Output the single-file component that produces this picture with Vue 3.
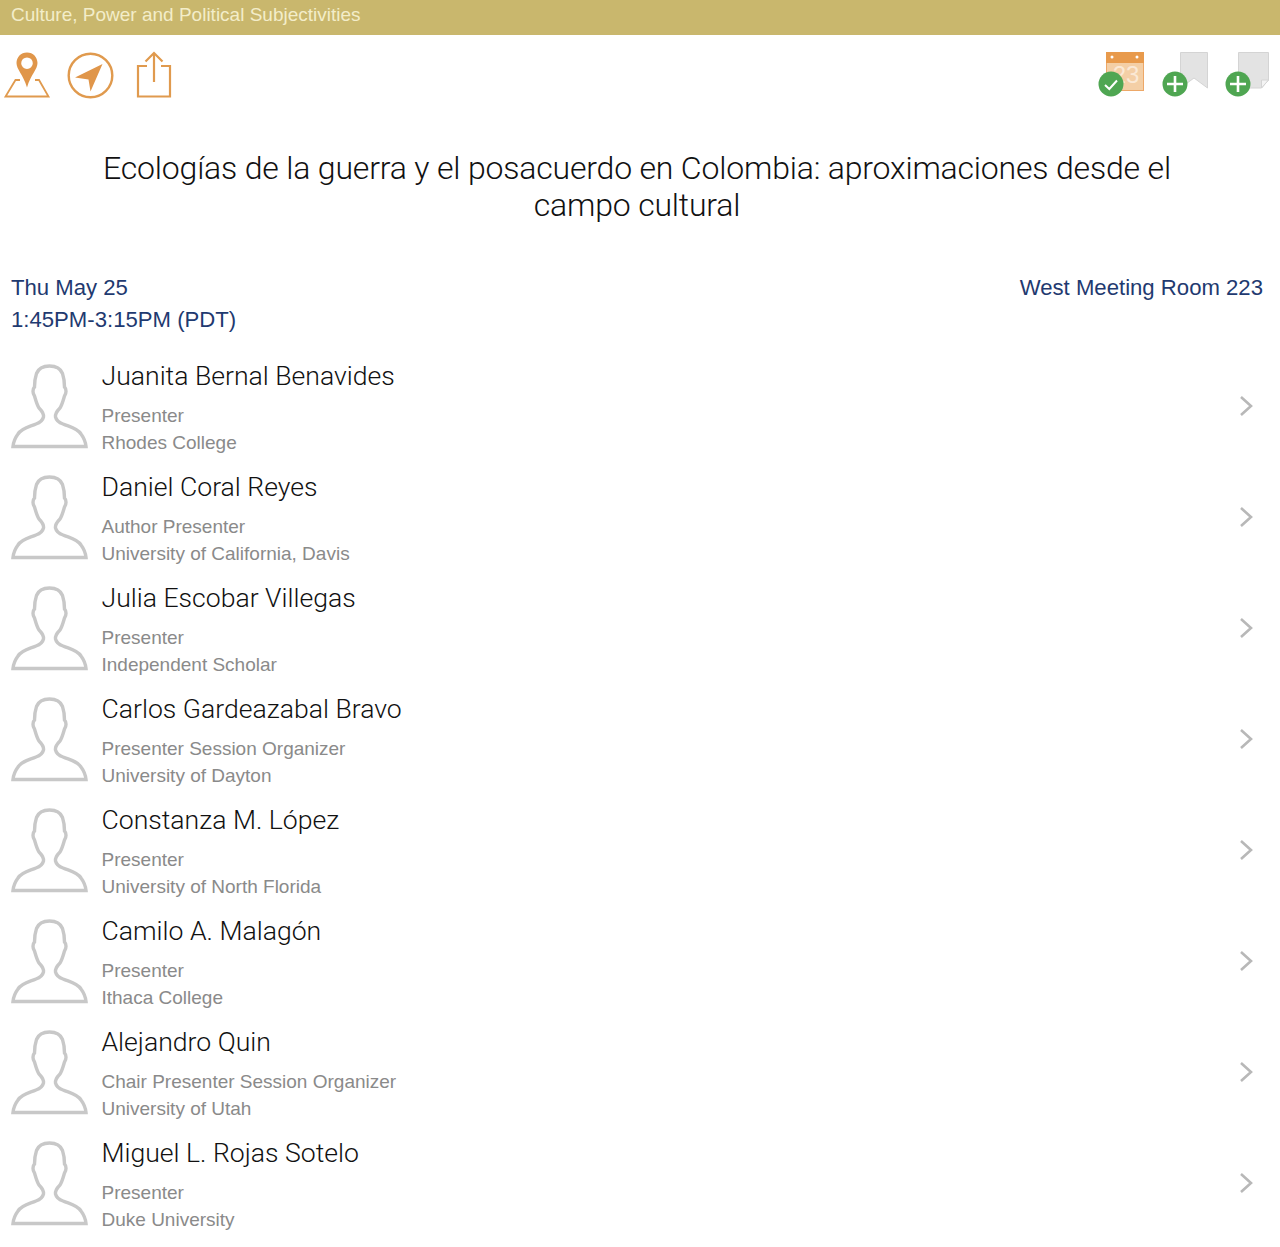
<script setup>
const people = [
  { name: 'Juanita Bernal Benavides', role: 'Presenter', org: 'Rhodes College' },
  { name: 'Daniel Coral Reyes', role: 'Author Presenter', org: 'University of California, Davis' },
  { name: 'Julia Escobar Villegas', role: 'Presenter', org: 'Independent Scholar' },
  { name: 'Carlos Gardeazabal Bravo', role: 'Presenter Session Organizer', org: 'University of Dayton' },
  { name: 'Constanza M. López', role: 'Presenter', org: 'University of North Florida' },
  { name: 'Camilo A. Malagón', role: 'Presenter', org: 'Ithaca College' },
  { name: 'Alejandro Quin', role: 'Chair Presenter Session Organizer', org: 'University of Utah' },
  { name: 'Miguel L. Rojas Sotelo', role: 'Presenter', org: 'Duke University' },
]
</script>

<template>
  <div class="page">
    <header class="band">Culture, Power and Political Subjectivities</header>

    <div class="toolbar">
      <div class="tools">
        <svg class="map" width="48" height="47" viewBox="0 0 48 47">
          <path d="M17 28H12.500L2.500 44.500H45.500L36 28H32" fill="none" stroke="#e09a4e" stroke-width="1.800"/>
          <path fill-rule="evenodd" d="M24 0.500C17.800 0.500 13.500 5.300 13.500 11C13.500 17.500 20 22 24 35.500C28 22 34.500 17.500 34.500 11C34.500 5.300 30.200 0.500 24 0.500ZM24 5.400A5.800 5.800 0 1 1 24 17A5.800 5.800 0 1 1 24 5.400Z" fill="#e0964a"/>
        </svg>
        <svg class="compass" width="47" height="47" viewBox="0 0 47 47">
          <circle cx="23.500" cy="23.500" r="21.800" fill="none" stroke="#e09a4e" stroke-width="2.400"/>
          <path d="M35.500 12L8 25.500L21.500 27.500L23.500 39.500Z" fill="#e0964a"/>
        </svg>
        <svg class="share" width="36" height="47" viewBox="0 0 36 47">
          <path d="M11 15H2V45.500H34V15H25" fill="none" stroke="#e09a4e" stroke-width="2.200"/>
          <path d="M18 31V2M9.500 10.500L18 2L26.500 10.500" fill="none" stroke="#e09a4e" stroke-width="2.200"/>
        </svg>
      </div>
      <div class="marks">
        <svg class="mark" width="47" height="47" viewBox="0 0 47 47">
          <rect x="8.500" y="1.500" width="37" height="38" fill="#f4cfa6" stroke="#eda868"/>
          <rect x="8" y="1" width="38" height="11" fill="#e89a4c"/>
          <circle cx="14" cy="6" r="1.500" fill="#fff"/>
          <circle cx="39" cy="6" r="1.500" fill="#fff"/>
          <text x="28" y="32" class="day">23</text>
          <circle cx="13" cy="33" r="12.500" fill="#4fa652"/>
          <path d="M7 34L11.300 38L19 29.500" fill="none" stroke="#fff" stroke-width="2"/>
        </svg>
        <svg class="mark" width="47" height="47" viewBox="0 0 47 47">
          <path d="M18.500 1.500H45.500V37L32 27L18.500 37Z" fill="#e3e3e3" stroke="#d4d4d4"/>
          <circle cx="13" cy="33" r="12.500" fill="#4fa652"/>
          <path d="M13 25V41M5 33H21" stroke="#fff" stroke-width="2.600"/>
        </svg>
        <svg class="mark last" width="45" height="47" viewBox="0 0 45 47">
          <path d="M13.500 1.500H43.500V29L36.500 37H13.500Z" fill="#e3e3e3" stroke="#d4d4d4"/>
          <path d="M36.500 37V29H43.500Z" fill="#f4f4f4" stroke="#d4d4d4"/>
          <circle cx="13" cy="33" r="12.500" fill="#4fa652"/>
          <path d="M13 25V41M5 33H21" stroke="#fff" stroke-width="2.600"/>
        </svg>
      </div>
    </div>

    <h1 class="title">Ecologías de la guerra y el posacuerdo en Colombia: aproximaciones desde el campo cultural</h1>

    <div class="meta">
      <div>
        <div>Thu May 25</div>
        <div>1:45PM-3:15PM (PDT)</div>
      </div>
      <div>West Meeting Room 223</div>
    </div>

    <ul class="people">
      <li v-for="p in people" :key="p.name" class="person">
        <svg class="avatar" width="78" height="86" viewBox="0 0 78 86">
          <path d="M38.500 3C32 3 27.500 5.500 25.500 10.500C24 15 23.500 20 23.500 24C21.500 26 21.500 30 23.500 33C25 38 26 42 28 45C31 48 33 51 32.500 54C31.500 58 28 60 25 61C18 64 11 65 7 71C4 75 2.500 79 2 83.500H75C74.500 79 73 75 70 71C66 65 59 64 52 61C49 60 45.500 58 44.500 54C44 51 46 48 49 45C51 42 52 38 53.500 33C55.500 30 55.500 26 53.500 24C53.500 20 53 15 51.500 10.500C49.500 5.500 45 3 38.500 3Z" fill="none" stroke="#c8c8c8" stroke-width="3.400"/>
        </svg>
        <div class="text">
          <div class="name">{{ p.name }}</div>
          <div class="role">{{ p.role }}</div>
          <div class="org">{{ p.org }}</div>
        </div>
        <svg class="chev" width="14" height="22" viewBox="0 0 14 22">
          <path d="M2 2L12 11L2 20" fill="none" stroke="#b8b8b8" stroke-width="2.600"/>
        </svg>
      </li>
    </ul>
  </div>
</template>

<style>
html, body { margin: 0; background: #fff; }
</style>

<style scoped>
.page {
  width: 1280px;
  height: 1247px;
  overflow: hidden;
  background: #fff;
  font-family: "Liberation Sans", Arial, sans-serif;
}
.band {
  height: 35px;
  background: #c9b76d;
  color: #f3edc9;
  font-size: 19px;
  line-height: 30px;
  padding-left: 11px;
  box-sizing: border-box;
}
.toolbar {
  display: flex;
  justify-content: space-between;
  height: 81px;
  padding-top: 16px;
  box-sizing: border-box;
}
.tools { display: flex; align-items: flex-start; padding-left: 3px; }
.map { margin-top: 1px; }
.compass { margin-left: 16px; margin-top: 1px; }
.share { margin-left: 22px; margin-top: 0; }
.marks { display: flex; align-items: flex-start; padding-right: 10px; margin-top: 0; }
.mark { margin-left: 17px; }
.mark.last { margin-left: 16px; }
.day { font-size: 24px; fill: #fbe9d6; text-anchor: middle; font-family: "Liberation Sans", sans-serif; }
.title {
  margin: 34px 0 0 87px;
  width: 1100px;
  text-align: center;
  font-family: Roboto, "Liberation Sans", sans-serif;
  font-weight: 300;
  font-size: 32px;
  letter-spacing: -0.190px;
  line-height: 37px;
  color: #111;
}
.meta {
  display: flex;
  justify-content: space-between;
  margin-top: 48px;
  padding: 0 17px 0 11px;
  color: #1f3a70;
  font-size: 22.150px;
  line-height: 32px;
}
.people { list-style: none; margin: 14px 0 0; padding: 0; }
.person {
  display: flex;
  align-items: flex-start;
  height: 111px;
  position: relative;
}
.avatar { margin: 13px 0 0 11px; flex: none; }
.text { margin-left: 12.500px; flex: 1; padding-top: 10px; }
.name { font-family: Roboto, "Liberation Sans", sans-serif; font-weight: 300; font-size: 26.600px; line-height: 32px; color: #111; }
.role { margin-top: 10px; font-size: 19px; line-height: 27px; color: #8a8a8a; }
.org { font-size: 19px; line-height: 27px; color: #8a8a8a; }
.chev { margin: 45px 27px 0 0; flex: none; }
</style>
